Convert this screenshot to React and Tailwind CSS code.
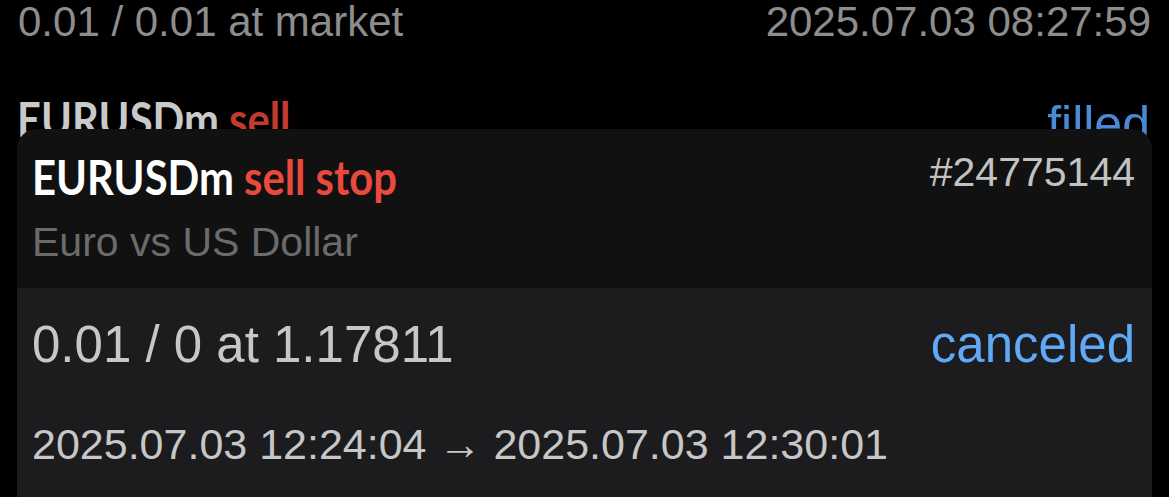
import React from "react";

const sans = "font-['Liberation_Sans',Arial,sans-serif]";
const cond = "font-['Lato','Open_Sans',sans-serif] font-bold";

function Title({ symbol, side, dim }) {
  return (
    <div className={`${cond} text-[48px] leading-[48px] whitespace-nowrap inline-block origin-left scale-x-[0.87]`}>
      <span className={dim ? "text-[#c9c9c9]" : "text-white"}>{symbol}</span>{" "}
      <span className={dim ? "text-[#c33b30]" : "text-[#ea4a3d]"}>{side}</span>
    </div>
  );
}

function OrderCard() {
  return (
    <div className="relative z-10 -mt-[19px] mx-[17px] flex-1 flex flex-col rounded-t-[20px] overflow-hidden">
      <div className="bg-[#111111] pl-[15px] pr-[17px] pt-[23px] pb-[26px] flex justify-between items-start">
        <div className="flex flex-col">
          <div className="mt-[1px]">
            <Title symbol="EURUSDm" side="sell stop" />
          </div>
          <div className={`${sans} mt-[21px] text-[41px] leading-[40px] text-[#6b6b6b]`}>Euro vs US Dollar</div>
        </div>
        <div className={`${sans} text-[41px] leading-[40px] text-[#c2c2c2]`}>#24775144</div>
      </div>
      <div className="flex-1 bg-[#1c1c1e] pl-[15px] pr-[17px] pt-[32px]">
        <div className={`${sans} flex justify-between text-[51px] leading-[50px]`}>
          <span className="text-[#c7c7c7]">0.01 / 0 at 1.17811</span>
          <span className="text-[#5fa9f6]">canceled</span>
        </div>
        <div className={`${sans} mt-[53px] text-[43px] leading-[42px] text-[#c7c7c7]`}>
          2025.07.03 12:24:04 → 2025.07.03 12:30:01
        </div>
      </div>
    </div>
  );
}

export default function App() {
  return (
    <div className="h-screen overflow-hidden bg-black flex flex-col">
      <div className={`${sans} flex justify-between pl-[18px] pr-[18px] text-[42px] leading-[44px] text-[#8d8d8d]`}>
        <span>0.01 / 0.01 at market</span>
        <span>2025.07.03 08:27:59</span>
      </div>
      <div className="flex justify-between items-start pl-[17px] pr-[19px] mt-[51px]">
        <Title symbol="EURUSDm" side="sell" dim />
        <span className={`${sans} mt-[5px] text-[50px] leading-[48px] text-[#4a8ad4]`}>filled</span>
      </div>
      <OrderCard />
    </div>
  );
}
